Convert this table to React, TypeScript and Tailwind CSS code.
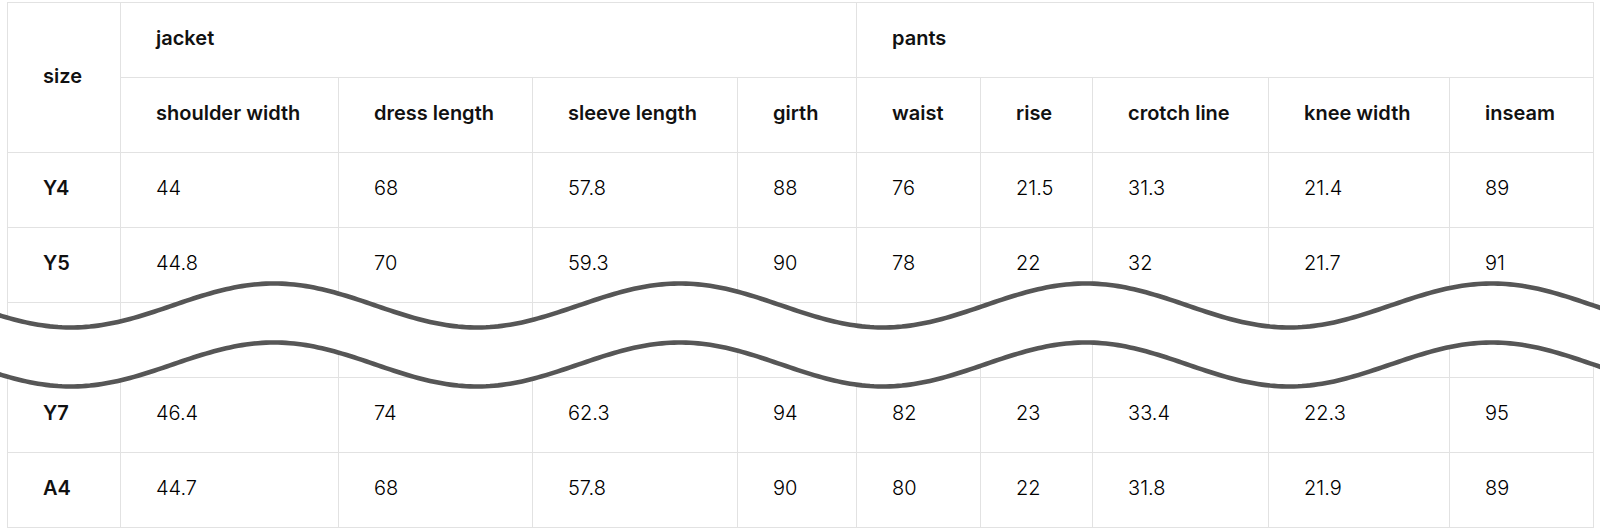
import React from "react";

const cols = [113, 218, 194, 205, 119, 124, 112, 176, 181, 144];

const rows: { size: string; v: string[] }[] = [
  { size: "Y4", v: ["44", "68", "57.8", "88", "76", "21.5", "31.3", "21.4", "89"] },
  { size: "Y5", v: ["44.8", "70", "59.3", "90", "78", "22", "32", "21.7", "91"] },
  { size: "Y6", v: ["", "", "", "", "", "", "", "", ""] },
  { size: "Y7", v: ["46.4", "74", "62.3", "94", "82", "23", "33.4", "22.3", "95"] },
  { size: "A4", v: ["44.7", "68", "57.8", "90", "80", "22", "31.8", "21.9", "89"] },
];

const subHeads = [
  "shoulder width",
  "dress length",
  "sleeve length",
  "girth",
  "waist",
  "rise",
  "crotch line",
  "knee width",
  "inseam",
];

function wave(c: number, reverse = false) {
  const pts: string[] = [];
  const A = 22;
  const P = 406;
  const xs: number[] = [];
  for (let x = -10; x <= 1610; x += 4) xs.push(x);
  if (reverse) xs.reverse();
  xs.forEach((x) => {
    const y = c - A * Math.cos((2 * Math.PI * (x - 274)) / P);
    pts.push(`${x.toFixed(1)} ${y.toFixed(2)}`);
  });
  return pts;
}

function Break() {
  const top = wave(305.5);
  const bottom = wave(364.5, true);
  const fill = `M ${top.join(" L ")} L ${bottom.join(" L ")} Z`;
  const topLine = `M ${top.join(" L ")}`;
  const bottomLine = `M ${wave(364.5).join(" L ")}`;
  return (
    <svg
      className="absolute left-0 top-0 pointer-events-none"
      width={1600}
      height={530}
      viewBox="0 0 1600 530"
    >
      <path d={fill} fill="#ffffff" />
      <path d={topLine} fill="none" stroke="#565656" strokeWidth={4.6} />
      <path d={bottomLine} fill="none" stroke="#565656" strokeWidth={4.6} />
    </svg>
  );
}

export default function App() {
  const cell =
    "border border-[#e2e2e2] pl-[35px] pr-2 pt-0 pb-[4px] text-left align-middle h-[75px]";
  return (
    <div
      className="relative w-[1600px] h-[530px] bg-white overflow-hidden text-[#111111]"
      style={{ fontFamily: "Inter, 'Noto Sans', sans-serif" }}
    >
      <div className="pl-[7px] pr-[7px] pt-[2px]">
        <table className="w-full table-fixed border-collapse text-[20px] leading-none">
          <colgroup>
            {cols.map((w, i) => (
              <col key={i} style={{ width: w }} />
            ))}
          </colgroup>
          <thead>
            <tr>
              <th rowSpan={2} className={`${cell} font-semibold`}>
                size
              </th>
              <th colSpan={4} className={`${cell} font-semibold`}>
                jacket
              </th>
              <th colSpan={5} className={`${cell} font-semibold`}>
                pants
              </th>
            </tr>
            <tr>
              {subHeads.map((h) => (
                <th key={h} className={`${cell} font-semibold whitespace-nowrap`}>
                  {h}
                </th>
              ))}
            </tr>
          </thead>
          <tbody>
            {rows.map((r) => (
              <tr key={r.size}>
                <td className={`${cell} font-semibold`}>{r.size === "Y6" ? "" : r.size}</td>
                {r.v.map((v, i) => (
                  <td key={i} className={`${cell} font-light text-black`}>
                    {v}
                  </td>
                ))}
              </tr>
            ))}
          </tbody>
        </table>
      </div>
      <Break />
    </div>
  );
}
